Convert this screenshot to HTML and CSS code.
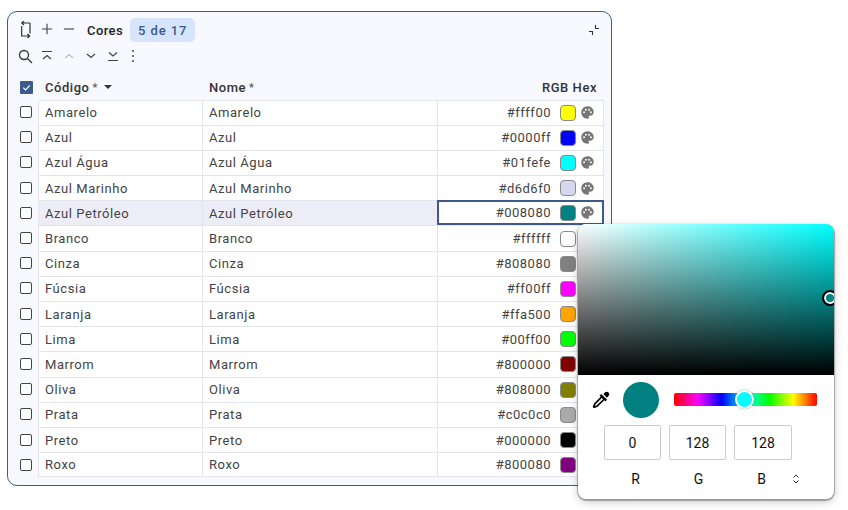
FILE: index.html
```html
<!DOCTYPE html>
<html lang="pt">
<head>
<meta charset="utf-8">
<title>Cores</title>
<link rel="stylesheet" href="styles.css">
</head>
<body>
<main class="page">
<section class="panel">
  <div class="bar bar-top">
    <svg class="ic ic-swap" viewBox="0 0 14 17"><path d="M11 2H3M5 0L2.700 2L5 4M11 2V12.500M2.700 5V15H10.500M8.300 13L10.700 15L8.300 17" fill="none" stroke="#333" stroke-width="1.200"/></svg>
    <svg class="ic ic-pm" viewBox="0 0 14 14"><path d="M7 1v12M1 7h12" stroke="#444" stroke-width="1.300"/></svg>
    <svg class="ic ic-pm" viewBox="0 0 14 14"><path d="M1 7h12" stroke="#444" stroke-width="1.300"/></svg>
    <span class="title">Cores</span>
    <span class="badge">5 de 17</span>
    <svg class="ic-collapse" viewBox="0 0 12 12"><path d="M1 7.500h3.500V11M7.500 1v3.500H11" fill="none" stroke="#333" stroke-width="1.100"/></svg>
  </div>
  <div class="bar bar-nav">
    <svg class="nav nav-search" viewBox="0 0 15 15"><circle cx="6" cy="6" r="4.500" fill="none" stroke="#333" stroke-width="1.300"/><path d="M9.500 9.500L14 14" stroke="#333" stroke-width="1.300"/></svg>
    <svg class="nav" viewBox="0 0 12 12"><path d="M1 1.500h10M2 9l4-3.500L10 9" fill="none" stroke="#444" stroke-width="1.200"/></svg>
    <svg class="nav" viewBox="0 0 12 12"><path d="M2 8l4-3.500L10 8" fill="none" stroke="#bbb" stroke-width="1.200"/></svg>
    <svg class="nav" viewBox="0 0 12 12"><path d="M2 4l4 3.500L10 4" fill="none" stroke="#444" stroke-width="1.200"/></svg>
    <svg class="nav" viewBox="0 0 12 12"><path d="M2 2.500l4 3.500 4-3.500M1 10.500h10" fill="none" stroke="#444" stroke-width="1.200"/></svg>
    <svg class="nav nav-more" viewBox="0 0 4 14"><circle cx="2" cy="2" r="1" fill="#444"/><circle cx="2" cy="7" r="1" fill="#444"/><circle cx="2" cy="12" r="1" fill="#444"/></svg>
  </div>
  <div class="head">
    <span class="gut"><span class="check-on"><svg viewBox="0 0 12 12"><path d="M3 6.200l2.200 2L9 4" fill="none" stroke="#fff" stroke-width="1.100"/></svg></span></span>
    <span class="c1 hcell">Código<i class="req">*</i><i class="sort"></i></span>
    <span class="c2 hcell">Nome<i class="req">*</i></span>
    <span class="c3 hcell hright">RGB Hex</span>
  </div>
  <div class="rows">
    <div class="row"><span class="gut"><i class="check"></i></span><span class="c1 cell">Amarelo</span><span class="c2 cell">Amarelo</span><span class="c3 cell hexcell"><span>#ffff00</span><i class="sw" style="background:#ffff00"></i><svg class="pal" viewBox="0 0 24 24"><use href="#palette"/></svg></span></div>
    <div class="row"><span class="gut"><i class="check"></i></span><span class="c1 cell">Azul</span><span class="c2 cell">Azul</span><span class="c3 cell hexcell"><span>#0000ff</span><i class="sw" style="background:#0000ff"></i><svg class="pal" viewBox="0 0 24 24"><use href="#palette"/></svg></span></div>
    <div class="row"><span class="gut"><i class="check"></i></span><span class="c1 cell">Azul Água</span><span class="c2 cell">Azul Água</span><span class="c3 cell hexcell"><span>#01fefe</span><i class="sw" style="background:#01fefe"></i><svg class="pal" viewBox="0 0 24 24"><use href="#palette"/></svg></span></div>
    <div class="row"><span class="gut"><i class="check"></i></span><span class="c1 cell">Azul Marinho</span><span class="c2 cell">Azul Marinho</span><span class="c3 cell hexcell"><span>#d6d6f0</span><i class="sw" style="background:#d6d6f0"></i><svg class="pal" viewBox="0 0 24 24"><use href="#palette"/></svg></span></div>
    <div class="row row-sel"><span class="gut"><i class="check"></i></span><span class="c1 cell">Azul Petróleo</span><span class="c2 cell">Azul Petróleo</span><span class="c3 cell hexcell editing"><span>#008080</span><i class="sw" style="background:#008080"></i><svg class="pal" viewBox="0 0 24 24"><use href="#palette"/></svg></span></div>
    <div class="row"><span class="gut"><i class="check"></i></span><span class="c1 cell">Branco</span><span class="c2 cell">Branco</span><span class="c3 cell hexcell"><span>#ffffff</span><i class="sw" style="background:#ffffff"></i><svg class="pal" viewBox="0 0 24 24"><use href="#palette"/></svg></span></div>
    <div class="row"><span class="gut"><i class="check"></i></span><span class="c1 cell">Cinza</span><span class="c2 cell">Cinza</span><span class="c3 cell hexcell"><span>#808080</span><i class="sw" style="background:#808080"></i><svg class="pal" viewBox="0 0 24 24"><use href="#palette"/></svg></span></div>
    <div class="row"><span class="gut"><i class="check"></i></span><span class="c1 cell">Fúcsia</span><span class="c2 cell">Fúcsia</span><span class="c3 cell hexcell"><span>#ff00ff</span><i class="sw" style="background:#ff00ff"></i><svg class="pal" viewBox="0 0 24 24"><use href="#palette"/></svg></span></div>
    <div class="row"><span class="gut"><i class="check"></i></span><span class="c1 cell">Laranja</span><span class="c2 cell">Laranja</span><span class="c3 cell hexcell"><span>#ffa500</span><i class="sw" style="background:#ffa500"></i><svg class="pal" viewBox="0 0 24 24"><use href="#palette"/></svg></span></div>
    <div class="row"><span class="gut"><i class="check"></i></span><span class="c1 cell">Lima</span><span class="c2 cell">Lima</span><span class="c3 cell hexcell"><span>#00ff00</span><i class="sw" style="background:#00ff00"></i><svg class="pal" viewBox="0 0 24 24"><use href="#palette"/></svg></span></div>
    <div class="row"><span class="gut"><i class="check"></i></span><span class="c1 cell">Marrom</span><span class="c2 cell">Marrom</span><span class="c3 cell hexcell"><span>#800000</span><i class="sw" style="background:#800000"></i><svg class="pal" viewBox="0 0 24 24"><use href="#palette"/></svg></span></div>
    <div class="row"><span class="gut"><i class="check"></i></span><span class="c1 cell">Oliva</span><span class="c2 cell">Oliva</span><span class="c3 cell hexcell"><span>#808000</span><i class="sw" style="background:#808000"></i><svg class="pal" viewBox="0 0 24 24"><use href="#palette"/></svg></span></div>
    <div class="row"><span class="gut"><i class="check"></i></span><span class="c1 cell">Prata</span><span class="c2 cell">Prata</span><span class="c3 cell hexcell"><span>#c0c0c0</span><i class="sw" style="background:#aaaaaa"></i><svg class="pal" viewBox="0 0 24 24"><use href="#palette"/></svg></span></div>
    <div class="row"><span class="gut"><i class="check"></i></span><span class="c1 cell">Preto</span><span class="c2 cell">Preto</span><span class="c3 cell hexcell"><span>#000000</span><i class="sw" style="background:#000000"></i><svg class="pal" viewBox="0 0 24 24"><use href="#palette"/></svg></span></div>
    <div class="row"><span class="gut"><i class="check"></i></span><span class="c1 cell">Roxo</span><span class="c2 cell">Roxo</span><span class="c3 cell hexcell"><span>#800080</span><i class="sw" style="background:#800080"></i><svg class="pal" viewBox="0 0 24 24"><use href="#palette"/></svg></span></div>
  </div>
</section>
<aside class="picker">
  <div class="sat"><i class="knob"></i></div>
  <div class="pick-controls">
    <svg class="dropper" viewBox="0 0 24 24"><path d="M19.350 11.720L17.220 13.850L15.810 12.430L8.100 20.140L3.500 22L2 20.500L3.860 15.900L11.570 8.190L10.150 6.780L12.280 4.650L19.350 11.720M16.760 3C17.930 1.830 19.830 1.830 21 3C22.170 4.170 22.170 6.070 21 7.240L19.080 9.160L14.840 4.920L16.760 3M5.560 17.030L4.500 19.500L6.970 18.440L14.400 11L13 9.600L5.560 17.030Z" fill="#000"/></svg>
    <span class="preview"></span>
    <span class="hue"><i class="hue-thumb"></i></span>
  </div>
  <div class="inputs">
    <span class="num">0</span>
    <span class="num">128</span>
    <span class="num">128</span>
  </div>
  <div class="labels">
    <span class="lab">R</span>
    <span class="lab">G</span>
    <span class="lab">B</span>
    <svg class="updown" viewBox="0 0 8 12"><path d="M1.500 4.500L4 2l2.500 2.500M1.500 7.500L4 10l2.500-2.500" fill="none" stroke="#333" stroke-width="1"/></svg>
  </div>
</aside>
</main>
<svg class="defs" aria-hidden="true"><symbol id="palette" viewBox="0 0 24 24"><path d="M12 2C6.490 2 2 6.490 2 12s4.490 10 10 10c1.380 0 2.500-1.120 2.500-2.500 0-.610-.230-1.200-.640-1.670-.080-.100-.130-.210-.130-.330 0-.280.220-.500.500-.500H16c3.310 0 6-2.690 6-6 0-4.960-4.490-9-10-9zM6.500 13a1.500 1.500 0 1 1 0-3 1.500 1.500 0 0 1 0 3zm3-4a1.500 1.500 0 1 1 0-3 1.500 1.500 0 0 1 0 3zm5 0a1.500 1.500 0 1 1 0-3 1.500 1.500 0 0 1 0 3zm3 4a1.500 1.500 0 1 1 0-3 1.500 1.500 0 0 1 0 3z" fill="#777"/></symbol></svg>
</body>
</html>
```
FILE: styles.css
```css
* { box-sizing: border-box; }
html, body { margin: 0; padding: 0; background: #fff; }
body { width: 848px; height: 510px; overflow: hidden; font-family: Roboto, "Liberation Sans", sans-serif; color: #333; }
.page { position: relative; width: 848px; height: 510px; padding: 11px 0 0 7px; }
.defs { display: none; }

.panel { width: 605px; height: 475px; background: #f8f8ff; border: 1px solid #3d5a8a; border-radius: 10px; display: flex; flex-direction: column; }
.bar { display: flex; align-items: center; }
.bar-top { height: 32px; margin-top: 2px; padding-left: 11px; }
.ic-swap { width: 14px; height: 17px; margin-right: 5px; margin-bottom: 2px; }
.ic-pm { width: 12px; height: 12px; margin-left: 3px; margin-right: 6px; margin-bottom: 2px; }
.ic-pm + .ic-pm { margin-left: 4px; margin-right: 6px; }
.title { font-size: 13px; font-weight: 500; color: #222; letter-spacing: .4px; margin-left: 6px; }
.badge { margin-left: 7px; height: 24px; padding: 0 8px; border-radius: 5px; background: #d6e4fd; color: #3d5a8a; font-size: 13px; font-weight: 500; letter-spacing: .9px; display: flex; align-items: center; }
.ic-collapse { width: 12px; height: 12px; margin-left: auto; margin-right: 11px; }

.bar-nav { height: 22px; margin-top: -1px; padding-left: 10px; gap: 10px; }
.nav { width: 12px; height: 12px; flex: none; }
.nav-search { width: 15px; height: 15px; margin-right: -2px; }
.nav-more { width: 4px; height: 14px; margin-left: 2px; }

.head { display: flex; height: 32.500px; padding-top: 9px; align-items: center; }
.gut { width: 30px; flex: none; display: flex; justify-content: center; padding-left: 6px; }
.c1 { width: 164px; flex: none; }
.c2 { width: 235px; flex: none; }
.c3 { width: 167px; flex: none; }
.hcell { font-size: 13px; font-weight: 500; color: #333; letter-spacing: .55px; padding-left: 7px; display: flex; align-items: center; }
.hright { justify-content: flex-end; padding-right: 7px; }
.req { font-style: normal; font-size: 11px; margin-left: 3px; color: #555; }
.sort { width: 0; height: 0; margin-left: 6px; margin-bottom: 2px; border-left: 4px solid transparent; border-right: 4px solid transparent; border-top: 4px solid #333; }
.check-on { width: 13px; height: 13px; border-radius: 1px; background: #3d5a8a; display: block; }
.check-on svg { display: block; width: 13px; height: 13px; }
.check { display: block; width: 12px; height: 12px; border: 1.400px solid #444; border-radius: 2px; background: #fff; }

.rows { display: flex; flex-direction: column; }
.row { display: flex; height: 25.200px; align-items: stretch; }
.row .gut { align-items: center; background: #f8f8ff; }
.cell { background: #fff; border-top: 1px solid #e4e4ee; border-left: 1px solid #e4e4ee; font-size: 13px; letter-spacing: .55px; color: #444; padding-left: 6px; display: flex; align-items: center; }
.row:last-child .cell { border-bottom: 1px solid #e4e4ee; }
.hexcell { justify-content: flex-end; padding-right: 8px; border-right: 1px solid #e4e4ee; letter-spacing: .5px; }
.sw { display: block; width: 16px; height: 16px; margin-left: 9px; border-radius: 4px; border: 1px solid #8a8a8a; flex: none; }
.pal { width: 15px; height: 15px; margin-left: 4px; flex: none; }
.row-sel .cell { background: #ededf7; }
.row-sel .gut { background: #f8f8ff; }
.row-sel .editing { background: #fff; border: 2px solid #3d5a8a; padding-right: 7px; }

.picker { position: absolute; left: 578px; top: 224px; width: 256px; height: 275px; background: #fff; border-radius: 8px; box-shadow: 0 1px 1px 1px rgba(0,0,0,.3), 0 3px 10px rgba(0,0,0,.2); overflow: hidden; }
.sat { position: relative; height: 151px; background: linear-gradient(to bottom, rgba(0,0,0,0), #000), linear-gradient(to right, #fff, #0ff); }
.knob { position: absolute; right: -4px; top: 66px; width: 16px; height: 16px; border-radius: 50%; border: 2px solid #000; box-shadow: inset 0 0 0 2px #fff; }
.pick-controls { display: flex; align-items: center; height: 50px; padding-left: 13px; }
.dropper { width: 20px; height: 20px; flex: none; }
.preview { width: 36px; height: 36px; border-radius: 50%; background: #008080; margin-left: 12px; flex: none; }
.hue { position: relative; display: block; width: 143px; height: 13px; margin-left: 15px; margin-bottom: 1px; border-radius: 2px; background: linear-gradient(to right, #f00, #f0f, #00f, #0ff, #0f0, #ff0, #f00); }
.hue-thumb { position: absolute; left: 61px; top: -3px; width: 19px; height: 19px; border-radius: 50%; background: #0ff; border: 2px solid #fff; box-shadow: 0 0 2px rgba(0,0,0,.4); }
.inputs { display: flex; gap: 8px; padding-left: 26px; }
.num { width: 57px; height: 35px; border: 1px solid #ccc; border-radius: 2px; font-size: 14px; color: #111; display: flex; align-items: center; justify-content: center; }
.num:last-child { width: 58px; }
.labels { display: flex; height: 38px; padding-left: 29px; gap: 6px; align-items: center; }
.lab { width: 57px; text-align: center; font-size: 14px; color: #111; }
.updown { width: 8px; height: 12px; flex: none; margin-left: -4px; }
```
